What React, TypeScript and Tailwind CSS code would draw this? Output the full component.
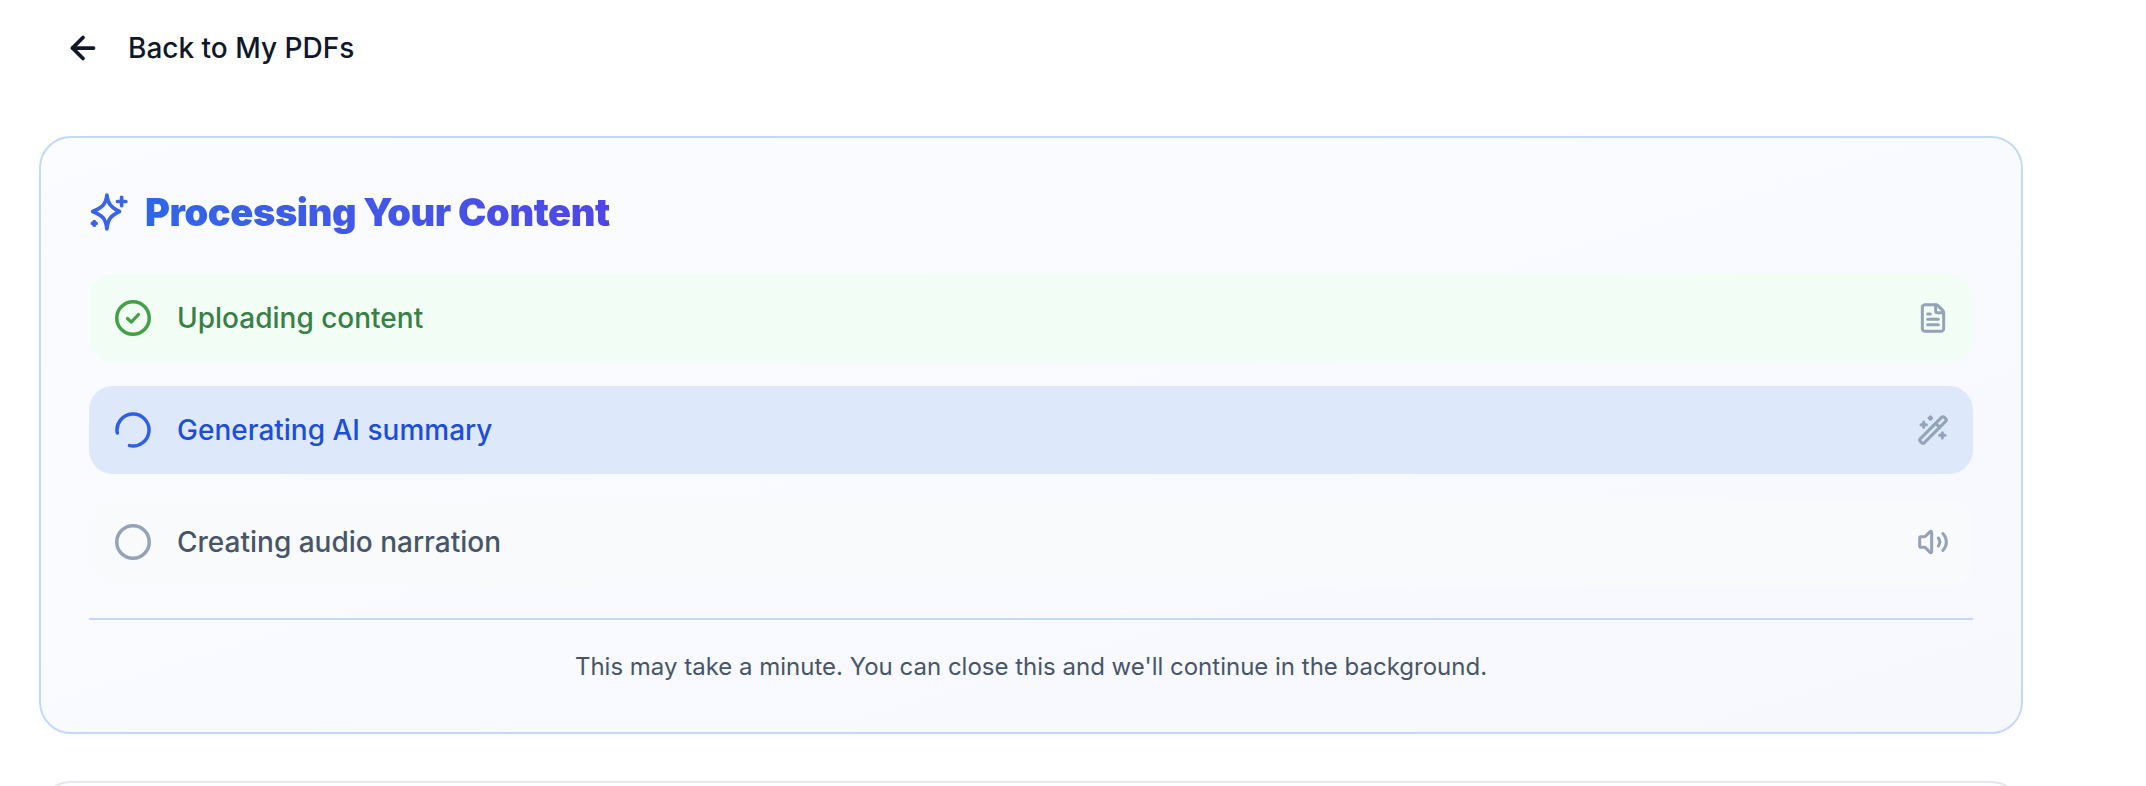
import { ArrowLeft, FileText, Volume2, WandSparkles } from "lucide-react";
import type { ReactNode } from "react";

type StepProps = {
  status: ReactNode;
  label: string;
  icon: ReactNode;
  rowClass: string;
  textClass: string;
};

const Step = ({ status, label, icon, rowClass, textClass }: StepProps) => (
  <div className={`flex h-[88px] items-center justify-between rounded-3xl pl-[26px] pr-6 ${rowClass}`}>
    <div className="flex items-center gap-[26px]">
      {status}
      <span className={`text-[28px] font-medium ${textClass}`}>{label}</span>
    </div>
    <div className="text-[#94a3b8]">{icon}</div>
  </div>
);

const CheckStatus = () => (
  <svg width="36" height="36" viewBox="0 0 36 36" fill="none" className="text-[#43a047]">
    <circle cx="18" cy="18" r="16.25" stroke="currentColor" strokeWidth="3.5" />
    <path d="M12.5 18.5l3.8 3.6 7.2-7.6" stroke="currentColor" strokeWidth="3.25" strokeLinecap="round" strokeLinejoin="round" />
  </svg>
);

const SpinnerStatus = () => (
  <svg width="36" height="36" viewBox="0 0 36 36" fill="none" className="text-[#2f5fe3]">
    <path d="M2.3 21A16 16 0 1 1 14.5 33.6" stroke="currentColor" strokeWidth="3.5" strokeLinecap="round" />
  </svg>
);

const EmptyStatus = () => (
  <svg width="36" height="36" viewBox="0 0 36 36" fill="none" className="text-[#94a3b8]">
    <circle cx="18" cy="18" r="16.25" stroke="currentColor" strokeWidth="3.5" />
  </svg>
);

const SparkIcon = () => (
  <svg width="40" height="40" viewBox="0 0 38 38" fill="none" className="text-[#3b63e6]">
    <path
      d="M17 3C18 11 20.5 14.5 29 18.5C20.5 22.5 18 26 17 35C16 26 13.5 22.5 3.5 18.5C13.5 14.5 16 11 17 3Z"
      stroke="currentColor"
      strokeWidth="3.5"
      strokeLinejoin="round"
    />
    <path d="M31 5v8M27 9h8" stroke="currentColor" strokeWidth="3.5" strokeLinecap="round" />
    <path d="M5 28v3.5M3.2 29.8h3.6" stroke="currentColor" strokeWidth="3.5" strokeLinecap="round" />
  </svg>
);

export default function App() {
  return (
    <div className="h-screen overflow-hidden bg-white font-['Inter',sans-serif]">
      <div className="flex h-[96px] items-center pl-[65px]">
        <ArrowLeft size={36} strokeWidth={2.5} className="text-[#0f172a]" />
        <span className="ml-[27px] text-[28px] font-medium text-[#0f172a]">Back to My PDFs</span>
      </div>

      <div className="ml-[39px] mt-10 w-[1984px] rounded-[32px] border-2 border-[#c3d9fb] bg-gradient-to-br from-[#fafcff] to-[#f6f8fe] px-12 pb-[48px] pt-[48px]">
        <div className="flex items-center gap-[16px]">
          <SparkIcon />
          <h2 className="bg-gradient-to-r from-[#2f66e8] to-[#4f46e5] bg-clip-text text-[38px] font-black leading-[52px] tracking-[-0.4px] text-transparent">
            Processing Your Content
          </h2>
        </div>

        <div className="mt-[36px] flex flex-col gap-6">
          <Step
            status={<CheckStatus />}
            label="Uploading content"
            icon={<FileText size={32} strokeWidth={2.25} />}
            rowClass="bg-[#f2fdf5]"
            textClass="text-[#388045]"
          />
          <Step
            status={<SpinnerStatus />}
            label="Generating AI summary"
            icon={<WandSparkles size={32} strokeWidth={2.25} />}
            rowClass="bg-[#dde8fb]"
            textClass="text-[#1d4ed8]"
          />
          <Step
            status={<EmptyStatus />}
            label="Creating audio narration"
            icon={<Volume2 size={32} strokeWidth={2.25} />}
            rowClass="bg-[#f9fafc]"
            textClass="text-[#475569]"
          />
        </div>

        <div className="mt-8 border-t-2 border-[#c3d9fb] pt-[30px] text-center text-[24px] leading-[34px] text-[#475569]">
          This may take a minute. You can close this and we'll continue in the background.
        </div>
      </div>

      <div className="ml-[39px] mt-[47px] h-40 w-[1984px] rounded-[32px] border-2 border-[#e5e7eb] bg-white" />
    </div>
  );
}
